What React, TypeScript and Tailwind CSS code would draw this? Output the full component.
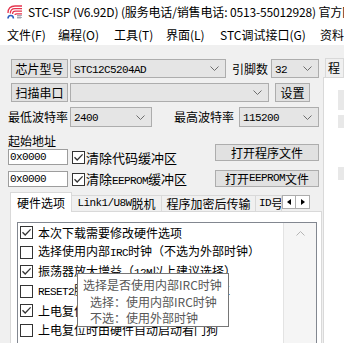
import React from 'react'

// SimSun-like half-width ascii
const A = ({ children }: { children: React.ReactNode }) => (
  <span className="font-['Liberation_Mono',monospace] text-[11px] tracking-[-0.6px]">{children}</span>
)

function Check({ on, className = '' }: { on?: boolean; className?: string }) {
  return (
    <span className={`w-[13px] h-[13px] shrink-0 border border-[#333333] bg-white flex items-center justify-center ${className}`}>
      {on && (
        <svg width="11" height="11" viewBox="0 0 11 11">
          <path d="M1.5 5.2 L4.2 8 L9.6 2.4" fill="none" stroke="#333333" strokeWidth="1.3" />
        </svg>
      )}
    </span>
  )
}

function Chevron() {
  return (
    <svg width="9" height="5" viewBox="0 0 9 5">
      <path d="M0.5 0.5 L4.5 4.5 L8.5 0.5" fill="none" stroke="#6d6d6d" strokeWidth="1" />
    </svg>
  )
}

function Combo({ className = '', children }: { className?: string; children?: React.ReactNode }) {
  return (
    <div className={`border border-[#adadad] bg-[#e5e5e5] flex items-center justify-between pl-[3px] pr-[6px] ${className}`}>
      <span>{children}</span>
      <Chevron />
    </div>
  )
}

function Btn({ className = '', children }: { className?: string; children: React.ReactNode }) {
  return (
    <div className={`border border-[#adadad] bg-[#e1e1e1] flex items-center justify-center whitespace-nowrap ${className}`}>
      {children}
    </div>
  )
}

function Logo() {
  return (
    <svg width="15" height="14" viewBox="0 0 15 14" className="ml-[7px] shrink-0">
      <g fill="none" stroke="#e5354f" strokeWidth="1.3">
        <path d="M1 8 Q1 1 8 1 H15" />
        <path d="M3.3 8.5 Q3.3 3.6 8 3.6 H15" />
        <path d="M5.6 9 Q5.6 6.2 8.5 6.2 H15" />
        <path d="M8 10 Q8 8.8 9.5 8.8 H15" />
      </g>
      <g stroke="#9a9aa8" strokeWidth="0.8">
        <path d="M10 10.5 H15 M10 12.5 H15 M11 10 V14 M13 10 V14" />
      </g>
      <path d="M1 13.5 Q1 10.5 3.8 10.5 Q6.4 10.5 6.4 13.5" fill="none" stroke="#2c5fbf" strokeWidth="1.6" />
    </svg>
  )
}

const menu = [
  { t: '文件(F)', w: 'w-[51px]' },
  { t: '编程(O)', w: 'w-[56px]' },
  { t: '工具(T)', w: 'w-[52px]' },
  { t: '界面(L)', w: 'w-[54px]' },
  { t: 'STC调试接口(G)', w: 'w-[100px]' },
  { t: '资料(D)', w: 'w-[60px]' },
]

const opts: { on: boolean; text: React.ReactNode }[] = [
  { on: true, text: '本次下载需要修改硬件选项' },
  { on: false, text: <>选择使用内部<A>IRC</A>时钟（不选为外部时钟）</> },
  { on: true, text: <>振荡器放大增益（<A>12M</A>以上建议选择）</> },
  { on: false, text: <><A>RESET2</A>脚的低压检测可用作低压复位</> },
  { on: true, text: '上电复位使用较长延时' },
  { on: false, text: '上电复位时由硬件自动启动看门狗' },
]

export default function App() {
  return (
    <div className="w-[344px] h-[343px] overflow-hidden bg-[#f0f0f0] relative font-['Noto_Sans_CJK_SC',sans-serif] text-[12px] text-black leading-none">
      {/* Title bar */}
      <div className="h-[24px] bg-white flex items-center whitespace-nowrap">
        <Logo />
        <span className="ml-[6px] tracking-[-0.15px]">STC-ISP (V6.92D) (服务电话/销售电话: 0513-55012928) 官方网站</span>
      </div>

      {/* Menu */}
      <div className="h-[21px] bg-white flex items-center whitespace-nowrap pl-[7px]">
        {menu.map((m) => (
          <span key={m.t} className={`${m.w} shrink-0`}>{m.t}</span>
        ))}
      </div>

      <div className="flex">
        {/* Left side */}
        <div className="w-[323px] shrink-0 pt-[14px]">
          <div className="h-[19px] flex items-center pl-[11px]">
            <Btn className="w-[57px] h-[19px]">芯片型号</Btn>
            <Combo className="ml-[2px] w-[156px] h-[19px]"><A>STC12C5204AD</A></Combo>
            <span className="ml-[6px] w-[38px] shrink-0">引脚数</span>
            <Combo className="ml-[1px] w-[48px] h-[19px]"><A>32</A></Combo>
          </div>

          <div className="mt-[5px] h-[19px] flex items-center pl-[11px]">
            <Btn className="w-[57px] h-[19px]">扫描串口</Btn>
            <Combo className="ml-[2px] w-[199px] h-[19px]" />
            <Btn className="ml-[6px] w-[35px] h-[19px]">设置</Btn>
          </div>

          <div className="mt-[5px] h-[20px] flex items-center pl-[8px]">
            <span className="w-[62px] shrink-0">最低波特率</span>
            <Combo className="w-[82px] h-[20px]"><A>2400</A></Combo>
            <span className="ml-[22px] w-[65px] shrink-0">最高波特率</span>
            <Combo className="w-[80px] h-[20px]"><A>115200</A></Combo>
          </div>

          {/* Start address + files */}
          <div className="mt-[7px] flex pl-[8px]">
            <div className="w-[207px]">
              <div className="h-[14px] flex items-center">起始地址</div>
              <div className="mt-[1px] h-[16px] flex items-center">
                <div className="w-[60px] h-[16px] border border-[#9d9d9d] bg-white flex items-center pl-[1px]"><A>0x0000</A></div>
                <Check on className="ml-[4px]" />
                <span className="ml-[1px] text-[13px] whitespace-nowrap">清除代码缓冲区</span>
              </div>
              <div className="mt-[6px] h-[16px] flex items-center">
                <div className="w-[60px] h-[16px] border border-[#9d9d9d] bg-white flex items-center pl-[1px]"><A>0x0000</A></div>
                <Check on className="ml-[4px]" />
                <span className="ml-[1px] text-[13px] whitespace-nowrap">清除<A>EEPROM</A>缓冲区</span>
              </div>
            </div>
            <div className="pt-[10px]">
              <Btn className="w-[104px] h-[17px]">打开程序文件</Btn>
              <Btn className="mt-[9px] w-[104px] h-[17px]">打开<A>EEPROM</A>文件</Btn>
            </div>
          </div>

          {/* Tabs */}
          <div className="mt-[5px] h-[20px] flex items-end pl-[10px] whitespace-nowrap">
            <div className="w-[62px] h-[20px] border border-[#d9d9d9] border-b-0 bg-white flex items-center justify-center relative z-10">硬件选项</div>
            <div className="w-[90px] h-[17px] border border-[#d9d9d9] border-l-0 flex items-center justify-center"><A>Link1/U8W</A>脱机</div>
            <div className="w-[94px] h-[17px] border border-[#d9d9d9] border-l-0 flex items-center justify-center">程序加密后传输</div>
            <div className="w-[26px] h-[17px] border border-[#d9d9d9] border-l-0 flex items-center pl-[3px] overflow-hidden"><A>ID</A>号</div>
            <div className="h-[17px] flex items-start">
              <div className="w-[14px] h-[14px] border border-[#adadad] bg-white flex items-center justify-center">
                <svg width="4" height="6" viewBox="0 0 4 6"><path d="M4 0 V6 L0 3 Z" fill="#000" /></svg>
              </div>
              <div className="w-[14px] h-[14px] border border-[#adadad] border-l-0 bg-white flex items-center justify-center">
                <svg width="4" height="6" viewBox="0 0 4 6"><path d="M0 0 V6 L4 3 Z" fill="#000" /></svg>
              </div>
            </div>
          </div>

          {/* Tab page */}
          <div className="ml-[10px] w-[312px] h-[140px] -mt-px border border-[#d9d9d9] bg-white pt-[10px] pl-[6px]">
            <div className="w-[300px] h-[130px] border border-[#828790] bg-white flex">
              <div className="flex-1 pl-[2px] overflow-hidden">
                {opts.map((o, i) => (
                  <div key={i} className="h-[19.5px] flex items-center whitespace-nowrap">
                    <Check on={o.on} />
                    <span className="ml-[5px]">{o.text}</span>
                  </div>
                ))}
              </div>
              <div className="w-[33px] border-l border-[#e3e3e3] bg-[#f5f5f5] flex justify-center pt-[8px]">
                <svg width="9" height="5" viewBox="0 0 9 5">
                  <path d="M0.5 4.5 L4.5 0.5 L8.5 4.5" fill="none" stroke="#b4b4b4" strokeWidth="1" />
                </svg>
              </div>
            </div>
          </div>
        </div>

        {/* Right side */}
        <div className="flex-1 pt-[13px]">
          <div className="ml-[2px] h-[19px] border border-[#d9d9d9] border-b-0 flex items-center pl-[2px]">程</div>
          <div className="h-[300px] bg-white border-l border-t border-[#d9d9d9] pl-[14px]">
            <div className="mt-[12px] h-[20px] bg-[#e8e8e8]" />
            <div className="mt-[5px] h-[13px] bg-[#e8e8e8]" />
            <div className="mt-[39px] h-[13px] bg-[#e8e8e8]" />
          </div>
        </div>
      </div>

      {/* Tooltip */}
      <div className="absolute left-[77px] top-[273px] w-[152px] h-[54px] border border-[#767676] bg-white text-[#575757] pt-[3px] whitespace-nowrap">
        <div className="h-[16.5px] flex items-center pl-[5px]">选择是否使用内部IRC时钟</div>
        <div className="h-[16.5px] flex items-center pl-[12px]">选择：使用内部IRC时钟</div>
        <div className="h-[16.5px] flex items-center pl-[12px]">不选：使用外部时钟</div>
      </div>
    </div>
  )
}
